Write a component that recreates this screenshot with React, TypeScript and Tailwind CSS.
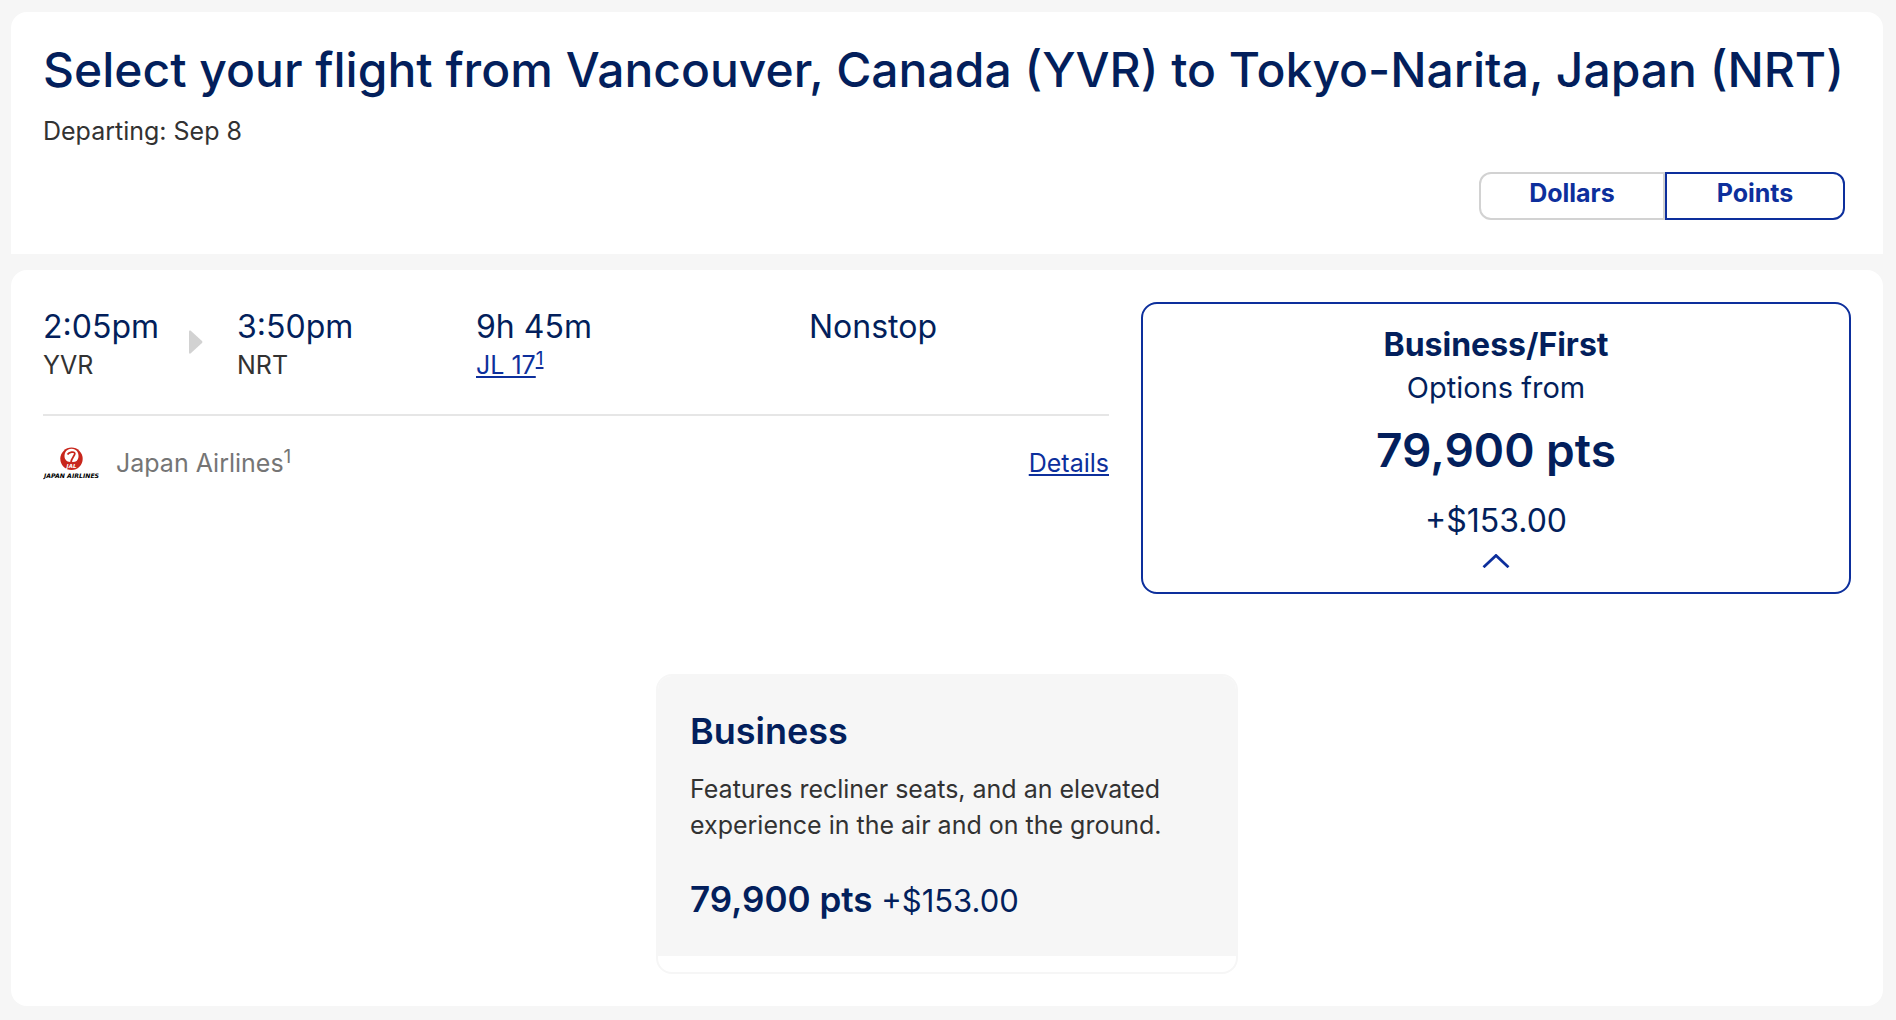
import { useState } from "react";

const currencies = ["Dollars", "Points"];

function JalLogo() {
  return (
    <svg viewBox="0 0 58 36" className="w-[58px] h-9" role="img" aria-label="Japan Airlines">
      <circle cx="28.5" cy="13.8" r="11.2" fill="#c8261c" />
      {/* gap between the wings */}
      <path
        d="M28.500 3.800C23.500 4 21.500 7.500 21.500 11C21.500 15 24 18.500 27 19L30 19C33 18.500 35.500 15 35.500 11C35.500 7.500 33.500 4 28.500 3.800Z"
        fill="#fff"
      />
      {/* crane neck and head */}
      <path
        d="M24.500 9.500C26 7 31.500 6 31.800 8.500C32 11 28 12.500 27.800 18.500"
        fill="none"
        stroke="#c8261c"
        strokeWidth="1.800"
      />
      <path d="M21.500 13C23 16 25 17 27.500 17L30 17C32.500 17 34.500 16 35.500 13L35 19 22 19Z" fill="#c8261c" />
      <text
        x="28.500"
        y="22.500"
        textAnchor="middle"
        fontSize="5.500"
        fontWeight="700"
        fontStyle="italic"
        fontFamily="DejaVu Sans, sans-serif"
        fill="#fff"
      >
        JAL
      </text>
      <text
        x="28.500"
        y="33"
        textAnchor="middle"
        fontSize="6.200"
        fontWeight="700"
        fontStyle="italic"
        fontFamily="DejaVu Sans, sans-serif"
        fill="#000"
      >
        JAPAN AIRLINES
      </text>
    </svg>
  );
}

function FlightSummary() {
  return (
    <div className="min-w-0">
      <div className="grid grid-cols-[194fr_239fr_333fr_300fr] pt-[5px] pb-[31px] border-b-2 border-[#e6e6e6]">
        <div className="flex items-center justify-between pr-[34px]">
          <div>
            <p className="text-[32px] leading-10 text-[#031f5c]">2:05pm</p>
            <p className="text-[25px] leading-9 text-[#323232]">YVR</p>
          </div>
          <svg viewBox="0 0 14 24" className="w-3.5 h-6 mt-[-6px]" aria-hidden="true">
            <path d="M0 1.500Q0 0 1.500.5L13 11Q14 12 13 13L1.500 23.500Q0 24 0 22.500Z" fill="#d2d2d2" />
          </svg>
        </div>

        <div>
          <p className="text-[32px] leading-10 text-[#031f5c]">3:50pm</p>
          <p className="text-[25px] leading-9 text-[#323232]">NRT</p>
        </div>

        <div>
          <p className="text-[32px] leading-10 text-[#031f5c]">9h 45m</p>
          <p className="text-[25px] leading-9">
            <a href="#flight" className="text-[#0d2f9c]">
              <span className="underline decoration-2 underline-offset-2">JL 17</span>
              <sup className="text-[19px] underline decoration-2 underline-offset-2">1</sup>
            </a>
          </p>
        </div>

        <p className="text-[32px] leading-10 text-[#031f5c]">Nonstop</p>
      </div>

      <div className="flex items-center pt-[29px] text-[25px] leading-9">
        <JalLogo />
        <p className="ml-[15px] text-[#757575]">
          Japan Airlines<sup className="text-[19px]">1</sup>
        </p>
        <a
          href="#details"
          className="ml-auto text-[#0d2f9c] underline decoration-2 underline-offset-2"
        >
          Details
        </a>
      </div>
    </div>
  );
}

export default function App() {
  const [currency, setCurrency] = useState("Points");
  const [open, setOpen] = useState(true);

  return (
    <main className="min-h-screen bg-[#f6f6f6] pt-3 pb-3.5 pl-[11px] pr-[13px] font-['Inter',sans-serif]">
      {/* HEADER */}
      <header className="bg-white rounded-t-2xl pt-7 pb-[34px] pl-8 pr-[38px]">
        <h1 className="text-[48px] leading-[60px] font-medium text-[#031f5c]">
          Select your flight from Vancouver, Canada (YVR) to Tokyo-Narita, Japan (NRT)
        </h1>
        <p className="mt-[13px] text-[25px] leading-9 text-[#323232]">Departing: Sep 8</p>

        <div className="flex justify-end mt-[23px]">
          {currencies.map((name) => (
            <button
              key={name}
              onClick={() => setCurrency(name)}
              aria-pressed={currency === name}
              className={`h-12 pb-1.5 border-2 text-[25px] leading-9 font-bold text-[#0d2f9c]
              first:w-[186px] first:rounded-l-xl last:w-[180px] last:rounded-r-xl
              ${currency === name ? "border-[#0d2f9c]" : "border-[#d2d2d2]"}`}
            >
              {name}
            </button>
          ))}
        </div>
      </header>

      {/* FLIGHT */}
      <section className="mt-4 bg-white rounded-2xl p-8">
        <div className="grid grid-cols-[1066fr_710fr] items-start gap-8">
          <FlightSummary />

          <button
            onClick={() => setOpen(!open)}
            aria-expanded={open}
            className="flex flex-col items-center pt-[21px] pb-6 border-2 border-[#0d2f9c] rounded-2xl text-[#031f5c]"
          >
            <span className="text-[32px] leading-10 font-bold">Business/First</span>
            <span className="mt-[3px] text-[29px] leading-10">Options from</span>
            <span className="mt-3.5 text-[46px] leading-[56px] font-semibold">79,900 pts</span>
            <span className="mt-[23px] text-[32px] leading-10">+$153.00</span>
            <svg viewBox="0 0 28 14" className="w-7 h-3.5 mt-[13px]" aria-hidden="true">
              <path
                d="M1.500 13.200 14 1.500 26.500 13.200"
                fill="none"
                stroke="#0d2f9c"
                strokeWidth="2.800"
              />
            </svg>
          </button>
        </div>

        {open && (
          <div className="w-[582px] mx-auto mt-20 pb-4 border-2 border-[#f6f6f6] rounded-2xl overflow-hidden">
            <div className="bg-[#f6f6f6] px-8 pt-[35px] pb-[35px]">
              <h2 className="text-[36px] leading-10 font-semibold text-[#031f5c]">Business</h2>
              <p className="mt-5 text-[25px] leading-9 text-[#323232]">
                Features recliner seats, and an elevated experience in the air and on the ground.
              </p>
              <p className="mt-9 text-[31px] leading-10 text-[#031f5c]">
                <strong className="text-[35px] font-semibold">79,900 pts</strong> +$153.00
              </p>
            </div>
          </div>
        )}
      </section>
    </main>
  );
}
